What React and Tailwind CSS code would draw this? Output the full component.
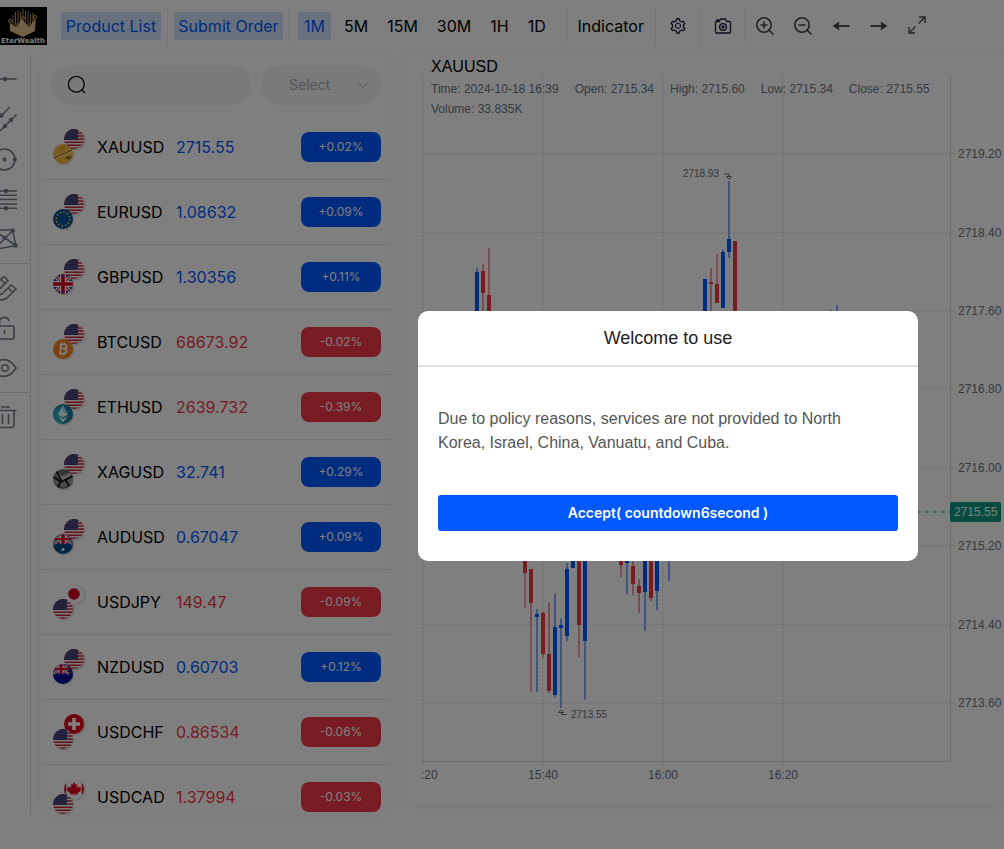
import { useState } from "react";
import { AiOutlineSetting } from "react-icons/ai";

const products = [
  { name: "XAUUSD", price: "2715.55", change: "+0.02%", top: "us", bottom: "gold" },
  { name: "EURUSD", price: "1.08632", change: "+0.09%", top: "us", bottom: "eu" },
  { name: "GBPUSD", price: "1.30356", change: "+0.11%", top: "us", bottom: "gb" },
  { name: "BTCUSD", price: "68673.92", change: "-0.02%", top: "us", bottom: "btc" },
  { name: "ETHUSD", price: "2639.732", change: "-0.39%", top: "us", bottom: "eth" },
  { name: "XAGUSD", price: "32.741", change: "+0.29%", top: "us", bottom: "silver" },
  { name: "AUDUSD", price: "0.67047", change: "+0.09%", top: "us", bottom: "au" },
  { name: "USDJPY", price: "149.47", change: "-0.09%", top: "jp", bottom: "us" },
  { name: "NZDUSD", price: "0.60703", change: "+0.12%", top: "us", bottom: "nz" },
  { name: "USDCHF", price: "0.86534", change: "-0.06%", top: "ch", bottom: "us" },
  { name: "USDCAD", price: "1.37994", change: "-0.03%", top: "ca", bottom: "us" },
];

const periods = ["1M", "5M", "15M", "30M", "1H", "1D"];

// [column, up, high, open/close top, open/close bottom, low]
const candles = [
  [9, true, 193, 197, 300, 320],
  [10, false, 189, 196, 218, 260],
  [11, false, 173, 220, 290, 300],
  [17, false, 450, 460, 498, 533],
  [18, false, 494, 494, 528, 617],
  [19, true, 534, 539, 542, 617],
  [20, false, 536, 538, 579, 583],
  [21, false, 528, 579, 616, 618],
  [22, true, 518, 552, 620, 622],
  [23, true, 543, 550, 553, 633],
  [24, true, 488, 494, 561, 566],
  [25, true, 450, 460, 493, 493],
  [26, false, 440, 450, 550, 582],
  [27, true, 440, 450, 566, 625],
  [33, false, 440, 450, 490, 502],
  [34, true, 440, 450, 488, 519],
  [35, false, 470, 491, 509, 520],
  [36, false, 504, 511, 518, 538],
  [37, true, 440, 450, 517, 556],
  [38, false, 440, 450, 523, 526],
  [39, true, 440, 450, 516, 535],
  [41, true, 440, 450, 470, 506],
  [47, true, 204, 204, 300, 320],
  [48, false, 193, 207, 209, 260],
  [49, false, 179, 209, 228, 228],
  [50, true, 174, 177, 233, 233],
  [51, true, 106, 164, 177, 183],
  [52, false, 166, 166, 300, 320],
  [68, true, 235, 250, 290, 300],
  [69, true, 230, 250, 290, 300],
];

const prices = [
  ["2719.20", 79],
  ["2718.40", 158],
  ["2717.60", 236],
  ["2716.80", 314],
  ["2716.00", 393],
  ["2715.20", 471],
  ["2714.40", 550],
  ["2713.60", 628],
];

const times = [
  [":20", 2],
  ["15:40", 122],
  ["16:00", 242],
  ["16:20", 362],
];

function Logo() {
  return (
    <svg width="47" height="38" viewBox="0 0 47 38" className="shrink-0 bg-black">
      <g stroke="#b9975a" strokeWidth="1">
        <path d="M10.5 12v8M13 8v13M15.5 5v13M18 3v13M20.5 5v10M23 2v9M25.5 4v11M28 4v12M30.5 7v10M33 6v14M35 11v9" />
      </g>
      <path d="M10 16l6 4 6-8 7 8 6-8v12l-12 6-13-6z" fill="#e2c187" />
      <g fill="#0b0b0b" stroke="#c9a467">
        <circle cx="10" cy="14" r="1.6" />
        <circle cx="35" cy="10" r="1.6" />
        <circle cx="23" cy="11" r="1.4" />
        <circle cx="17" cy="18" r="1.3" />
        <circle cx="29" cy="18" r="1.3" />
      </g>
      <text x="23" y="36" fontSize="7" fontWeight="700" textAnchor="middle" fill="#fff" fontFamily="DejaVu Sans, sans-serif">
        EterWealth
      </text>
    </svg>
  );
}

const usFlag = (
  <>
    <rect width="20" height="20" fill="#f4f4f4" />
    <path d="M0 .8h20M0 3.9h20M0 7h20M0 10.1h20M0 13.2h20M0 16.3h20M0 19.3h20" stroke="#c8203a" strokeWidth="1.5" />
    <rect width="14" height="11" fill="#3c3b6e" />
    <path d="M1 2h13M2 4.5h12M1 7h13M2 9.3h12" stroke="#a9a8c8" strokeWidth=".7" strokeDasharray=".8 1.4" />
  </>
);

const unionJack = (
  <>
    <path d="M0 0L20 20M20 0L0 20" stroke="#fff" strokeWidth="3.6" />
    <path d="M0 0L20 20M20 0L0 20" stroke="#d80027" strokeWidth="1.2" />
    <path d="M10 0v20M0 10h20" stroke="#fff" strokeWidth="6" />
    <path d="M10 0v20M0 10h20" stroke="#d80027" strokeWidth="3.6" />
  </>
);

const coins = {
  us: usFlag,
  gold: (
    <>
      <rect width="20" height="20" fill="#f3b845" />
      <path d="M0 13L20 4v4L1 16z" fill="#ffd97a" />
      <path d="M1 14l18-8" stroke="#7d5514" strokeWidth="1" />
      <path d="M12 13l7-1-3 4z" fill="#8a6120" />
      <path d="M6 4l5-2 2 2-5 2z" fill="#e09d2c" />
    </>
  ),
  eu: (
    <>
      <rect width="20" height="20" fill="#02529c" />
      <circle cx="10" cy="10" r="6.8" fill="none" stroke="#ffda44" strokeWidth="1.6" strokeDasharray="1.5 2.06" />
    </>
  ),
  gb: (
    <>
      <rect width="20" height="20" fill="#1b3f94" />
      {unionJack}
    </>
  ),
  btc: (
    <>
      <rect width="20" height="20" fill="#f7841a" />
      <path
        d="M8 5.5L7 14.5M8 5.5h3.6c2.8 0 2.8 4 0 4H8M11.3 9.6c3.2 0 2.9 4.9-.8 4.9H6M6.5 5.5H8M9 3.8v1.7M11.3 3.8v1.7M8.5 14.5v1.8M10.8 14.5v1.8"
        fill="none"
        stroke="#fff"
        strokeWidth="1.7"
      />
    </>
  ),
  eth: (
    <>
      <rect width="20" height="20" fill="#16829f" />
      <path d="M0 20V8l7-6 3 18z" fill="#2ba6bd" />
      <path d="M10 1.5l5 9-5 3-5-3z" fill="#e9fbff" />
      <path d="M10 1.5l5 9-5-2.5z" fill="#9fd6e4" />
      <path d="M5 12l5 3 5-3-5 6.5z" fill="#fff" />
    </>
  ),
  silver: (
    <>
      <rect width="20" height="20" fill="#6f6f6f" />
      <path d="M1 4l8 3 10-4-3 7-8 1z" fill="#bdbdbd" />
      <path d="M0 9l9 4 11-5v6l-10 4L0 13z" fill="#9a9a9a" />
      <path d="M0 8l8 5 12-6M3 2l5 9-3 8M12 10l4 7" stroke="#151515" strokeWidth="1.7" fill="none" />
    </>
  ),
  au: (
    <>
      <rect width="20" height="20" fill="#014a86" />
      <g transform="scale(1 .5)">{unionJack}</g>
      <circle cx="10" cy="15.5" r="1.5" fill="#fff" />
    </>
  ),
  jp: (
    <>
      <rect width="20" height="20" fill="#fcfcfc" />
      <circle cx="10" cy="10" r="5.8" fill="#d80027" />
    </>
  ),
  nz: (
    <>
      <rect width="20" height="20" fill="#0a0a92" />
      <g transform="scale(.8 .5)">{unionJack}</g>
      <circle cx="17" cy="8" r="1" fill="#d80027" />
    </>
  ),
  ch: (
    <>
      <rect width="20" height="20" fill="#e3001b" />
      <path d="M10 4v12M4 10h12" stroke="#fff" strokeWidth="3.6" />
    </>
  ),
  ca: (
    <>
      <rect width="20" height="20" fill="#fcfcfc" />
      <path d="M0 0h2.2v20H0zM17.8 0H20v20h-2.2z" fill="#e3001b" />
      <path
        d="M10 3l1.5 2.8 1.6-.8-.5 4 2-1.7.5 1.3 2-.3-.7 2.2 1 .7-3.8 3 .4 1.3-3.6-.4V17h-.8v-1.9l-3.6.4.4-1.3-3.8-3 1-.7-.7-2.2 2 .3.5-1.3 2 1.7-.5-4 1.6.8z"
        fill="#e3001b"
      />
    </>
  ),
};

function PairIcon({ id, top, bottom }) {
  return (
    <svg width="34" height="38" viewBox="0 0 34 38" className="shrink-0">
      <defs>
        <clipPath id={`${id}-coin`}>
          <circle cx="10" cy="10" r="10" />
        </clipPath>
      </defs>
      <circle cx="22.5" cy="12" r="10.5" fill="#000" opacity=".1" />
      <g transform="translate(11 1)">
        <g clipPath={`url(#${id}-coin)`}>{coins[top]}</g>
      </g>
      <circle cx="11" cy="27" r="10.5" fill="#000" opacity=".1" />
      <g transform="translate(0 16)">
        <g clipPath={`url(#${id}-coin)`}>{coins[bottom]}</g>
      </g>
    </svg>
  );
}

const tools = {
  ray: (
    <>
      <path d="M0 20h16.5" />
      <circle cx="5" cy="20" r="1.5" fill="currentColor" />
    </>
  ),
  parallel: (
    <>
      <path d="M0 18L10 8M0 32l16.5-16.5" />
      <g fill="currentColor">
        <circle cx="1.5" cy="16.5" r="1.5" />
        <circle cx="5" cy="27" r="1.5" />
        <circle cx="11" cy="21" r="1.5" />
      </g>
    </>
  ),
  circle: (
    <>
      <circle cx="4.5" cy="20.5" r="10.5" />
      <g fill="currentColor">
        <circle cx="4.5" cy="20.5" r="1.3" />
        <circle cx="14.8" cy="20.5" r="1.3" />
      </g>
    </>
  ),
  fibonacci: (
    <>
      <path d="M0 12h17M0 16.3h17M0 20.5h17M0 25h17M0 29.3h17" />
      <g fill="currentColor">
        <circle cx="6" cy="12" r="1.4" />
        <circle cx="6" cy="29.3" r="1.4" />
      </g>
    </>
  ),
  pattern: (
    <>
      <path d="M0 11h12.7l3 15.5L0 29.5M0 24.5l12.7-13M0 15.5l15.7 11" />
      <g fill="currentColor">
        <circle cx="12.7" cy="11.5" r="1.5" />
        <circle cx="15.7" cy="26.5" r="1.5" />
        <circle cx="4.7" cy="19" r="1.5" />
      </g>
    </>
  ),
  magnet: <path d="M-1 13l5-4.5 4 4-9 9M-1 26c1 1 3 0 4-1l8-8 5 4-9 9c-3 2-6 2.5-9 1M1 11.5l4 4M8 20l4.5 4" />,
  lock: (
    <>
      <rect x="-5" y="18" width="19" height="13" rx="1.5" />
      <path d="M-.5 18v-4c0-5.5 8-6.5 9.5-1M4.5 22v4" />
    </>
  ),
  eye: (
    <>
      <path d="M-1 12.5c7-2.5 13 1 17 7.5-4 6.5-10 10-17 7.5" />
      <circle cx="5" cy="20" r="3.3" />
    </>
  ),
  trash: <path d="M1 10h9M0 13.5h16.5M14 13.5v14q0 3-3 3H0M2.5 17v10M8.5 17v10" />,
};

function ToolGroup({ names }) {
  return (
    <div className="flex flex-col border-b border-[#dddddd] py-1 last:border-b-0">
      {names.map((name) => (
        <button key={name} aria-label={name} className="h-10 text-[#76808f]">
          <svg width="20" height="40" viewBox="0 0 20 40" fill="none" stroke="currentColor" strokeWidth="1.6">
            {tools[name]}
          </svg>
        </button>
      ))}
    </div>
  );
}

function Separator() {
  return <div className="h-[38px] w-px shrink-0 bg-[#ebedf1]" />;
}

function Header({ period, setPeriod }) {
  return (
    <header className="flex h-[55px] shrink-0 items-start pt-[7px]">
      <Logo />
      <div className="flex h-[38px] items-center text-base">
        <button className="ml-3.5 mr-1.5 h-7 w-[100px] rounded-xs bg-[#d2e3fe] text-[#0058ff]">Product List</button>
        <Separator />
        <button className="mx-1.5 h-7 w-[109px] rounded-xs bg-[#d2e3fe] text-[#0058ff]">Submit Order</button>
        <Separator />
        <div className="ml-2 mr-3.5 flex gap-[7px]">
          {periods.map((p) => (
            <button
              key={p}
              onClick={() => setPeriod(p)}
              className={`h-7 rounded-xs px-1.5 ${p === period ? "bg-[#d2e3fe] text-[#0058ff]" : ""}`}
            >
              {p}
            </button>
          ))}
        </div>
        <Separator />
        <button className="w-[88px]">Indicator</button>
        <Separator />
        <button aria-label="Settings" className="flex w-11 justify-center text-[#1a1a3d]">
          <AiOutlineSetting size={18} />
        </button>
        <Separator />
        <button aria-label="Screenshot" className="flex w-11 justify-center text-[#1a1a3d]">
          <svg width="18" height="18" viewBox="0 0 18 18" fill="none" stroke="currentColor" strokeWidth="1.3">
            <path d="M2.5 4.5h2.8l1.2-2.5h5l1.2 2.5h2.8q1 0 1 1v9.5q0 1-1 1h-13q-1 0-1-1V5.5q0-1 1-1zM3 4.2V3h2" />
            <circle cx="9" cy="10" r="3.4" />
            <circle cx="9" cy="10" r="1.1" />
          </svg>
        </button>
        <Separator />
        <div className="flex text-[#444]">
          <button aria-label="Zoom in" className="flex w-[38px] justify-center">
            <svg width="20" height="20" viewBox="0 0 20 20" fill="none" stroke="currentColor" strokeWidth="1.6">
              <circle cx="9" cy="9" r="7.2" />
              <path d="M14 14l4.5 4.5M9 5.5v7M5.5 9h7" />
            </svg>
          </button>
          <button aria-label="Zoom out" className="flex w-[38px] justify-center">
            <svg width="20" height="20" viewBox="0 0 20 20" fill="none" stroke="currentColor" strokeWidth="1.6">
              <circle cx="9" cy="9" r="7.2" />
              <path d="M14 14l4.5 4.5M5.5 9h7" />
            </svg>
          </button>
          <button aria-label="Scroll left" className="flex w-[38px] justify-center">
            <svg width="18" height="20" viewBox="0 0 18 20" stroke="currentColor" strokeWidth="1.8">
              <path d="M3 10h14.5" />
              <path d="M7.5 5.5l-1 4.5 1 4.5L.5 10z" fill="currentColor" stroke="none" />
            </svg>
          </button>
          <button aria-label="Scroll right" className="flex w-[38px] justify-center">
            <svg width="18" height="20" viewBox="0 0 18 20" stroke="currentColor" strokeWidth="1.8">
              <path d="M.5 10H15" />
              <path d="M10.5 5.5l1 4.5-1 4.5 7-4.5z" fill="currentColor" stroke="none" />
            </svg>
          </button>
          <button aria-label="Full screen" className="flex w-[38px] justify-center">
            <svg width="18" height="18" viewBox="0 0 18 18" fill="none" stroke="currentColor" strokeWidth="1.3">
              <path d="M11 1h6v6M17 1l-6.5 6.5M7 17H1v-6M1 17l6.5-6.5" />
            </svg>
          </button>
        </div>
      </div>
    </header>
  );
}

function ProductPanel() {
  return (
    <section className="w-[350px] shrink-0 overflow-hidden rounded-[10px] bg-white shadow-[0_0_10px_#0000000f]">
      <div className="flex gap-2.5 p-2.5">
        <label className="flex h-10 w-[200px] items-center rounded-full bg-[#f5f5f5] pl-4">
          <svg width="20" height="20" viewBox="0 0 20 20" fill="none" stroke="#000" strokeWidth="1.3">
            <circle cx="9.3" cy="9.3" r="7.9" />
            <path d="M14.5 14.5l3.5 3.5" />
          </svg>
          <input type="text" aria-label="Search" className="ml-2 w-36 bg-transparent text-sm outline-none" />
        </label>
        <div className="relative">
          <select
            aria-label="Category"
            defaultValue=""
            className="h-10 w-[120px] appearance-none rounded-full bg-[#f5f5f5] pl-7 text-sm text-[#a8abb2]"
          >
            <option value="">Select</option>
          </select>
          <svg
            width="12"
            height="12"
            viewBox="0 0 12 12"
            fill="none"
            stroke="#a8abb2"
            className="pointer-events-none absolute right-3 top-3.5"
          >
            <path d="M1 3.5l5 5 5-5" />
          </svg>
        </div>
      </div>
      <ul>
        {products.map((p) => {
          const up = p.change.startsWith("+");
          return (
            <li key={p.name} className="flex h-[65px] items-center border-b border-[#e4e7ed] pl-3 pr-2.5">
              <PairIcon id={p.name} top={p.top} bottom={p.bottom} />
              <span className="ml-2.5 w-[79px] text-base">{p.name}</span>
              <span className={`text-base ${up ? "text-[#0058ff]" : "text-[#f23645]"}`}>{p.price}</span>
              <button
                className={`ml-auto h-[30px] w-20 rounded-lg text-xs text-white ${up ? "bg-[#0058ff]" : "bg-[#f23645]"}`}
              >
                {p.change}
              </button>
            </li>
          );
        })}
      </ul>
    </section>
  );
}

function ChartPanel() {
  return (
    <section className="relative mb-2.5 min-w-0 flex-1 overflow-hidden rounded-l-[10px] bg-white pl-5 pt-5 font-['Liberation_Sans',sans-serif] shadow-[0_0_10px_#0000000f]">
      <svg width="583" height="720" className="block max-w-none text-xs" fill="#6a7482">
        <g stroke="#ededed" strokeWidth="2" strokeDasharray="2 2">
          {prices.map(([label, y]) => (
            <path key={label} d={`M0 ${y}H529`} />
          ))}
          {times.map(([label, x]) => (
            <path key={label} d={`M${x} 0V686`} />
          ))}
        </g>
        {candles.map(([col, up, high, top, bottom, low]) => (
          <g key={col} fill={up ? "#0058ff" : "#f23645"}>
            <rect x={col * 6 + 1} y={high} width="2" height={low - high} fill={up ? "#80abff" : "#f89aa2"} />
            <rect x={col * 6} y={top} width="4" height={bottom - top} />
          </g>
        ))}
        <path d="M0 686.5h529.5V0" fill="none" stroke="#dddddd" />
        <g stroke="#dddddd">
          {prices.map(([label, y]) => (
            <path key={label} d={`M530 ${y}h3`} />
          ))}
          {times.map(([label, x]) => (
            <path key={label} d={`M${x} 687v3`} />
          ))}
        </g>
        {prices.map(([label, y]) => (
          <text key={label} x="537" y={y + 4}>
            {label}
          </text>
        ))}
        {times.map(([label, x]) => (
          <text key={label} x={x < 10 ? 0 : x} y="704" textAnchor={x < 10 ? "start" : "middle"}>
            {label}
          </text>
        ))}
        <g fill="none" stroke="#6a7482">
          <path d="M303 99h5v3M305.5 101.5l2.5 2.5 2.5-2.5z" />
          <path d="M145.5 639.5h-5V637M137.5 637.5l2.5-2.5 2.5 2.5z" />
        </g>
        <text x="298" y="102" textAnchor="end" fontSize="10">
          2718.93
        </text>
        <text x="150" y="643" fontSize="10">
          2713.55
        </text>
        <path d="M0 437h529" stroke="#089981" strokeDasharray="4 4" />
        <rect x="529" y="427" width="51" height="20" rx="2" fill="#089981" />
        <text x="533" y="441" fill="#fff">
          2715.55
        </text>
      </svg>
      <div className="absolute inset-x-0 top-0 pl-[30px]">
        <h2 className="text-base">XAUUSD</h2>
        <div className="flex flex-wrap gap-x-4 text-xs leading-5 text-[#6a7482]">
          <span>Time: 2024-10-18 16:39</span>
          <span>Open: 2715.34</span>
          <span>High: 2715.60</span>
          <span>Low: 2715.34</span>
          <span>Close: 2715.55</span>
          <span>Volume: 33.835K</span>
        </div>
      </div>
    </section>
  );
}

function WelcomeDialog({ onAccept }) {
  return (
    <div className="fixed inset-0 flex items-center justify-center bg-black/50 pl-[332px] pt-[23px]">
      <div
        role="dialog"
        aria-labelledby="welcome-title"
        className="w-[500px] rounded-[10px] bg-white font-['Liberation_Sans',sans-serif]"
      >
        <h1
          id="welcome-title"
          className="h-14 border-b-2 border-[#dcdfe6] text-center text-lg leading-[54px] text-[#222]"
        >
          Welcome to use
        </h1>
        <div className="px-5 pb-[30px] pt-10">
          <p className="pr-5 text-base text-[#555]">
            Due to policy reasons, services are not provided to North Korea, Israel, China, Vanuatu, and Cuba.
          </p>
          <button
            onClick={onAccept}
            className="mt-10 h-9 w-full rounded-[3px] bg-[#0058ff] font-['Inter',sans-serif] text-sm font-semibold text-white"
          >
            Accept( countdown6second )
          </button>
        </div>
      </div>
    </div>
  );
}

export default function App() {
  const [period, setPeriod] = useState("1M");
  const [open, setOpen] = useState(true);

  return (
    <div className="flex h-screen flex-col overflow-hidden bg-white font-['Inter','Liberation_Sans',sans-serif] text-black">
      <Header period={period} setPeriod={setPeriod} />
      <main className="flex min-h-0 flex-1 pb-[34px]">
        <aside className="w-[31px] shrink-0 border-r border-[#dddddd]">
          <ToolGroup names={["ray", "parallel", "circle", "fibonacci", "pattern"]} />
          <ToolGroup names={["magnet", "lock", "eye"]} />
          <ToolGroup names={["trash"]} />
        </aside>
        <div className="flex min-w-0 flex-1 gap-2.5 pl-2.5">
          <ProductPanel />
          <ChartPanel />
        </div>
      </main>
      {open && <WelcomeDialog onAccept={() => setOpen(false)} />}
    </div>
  );
}
